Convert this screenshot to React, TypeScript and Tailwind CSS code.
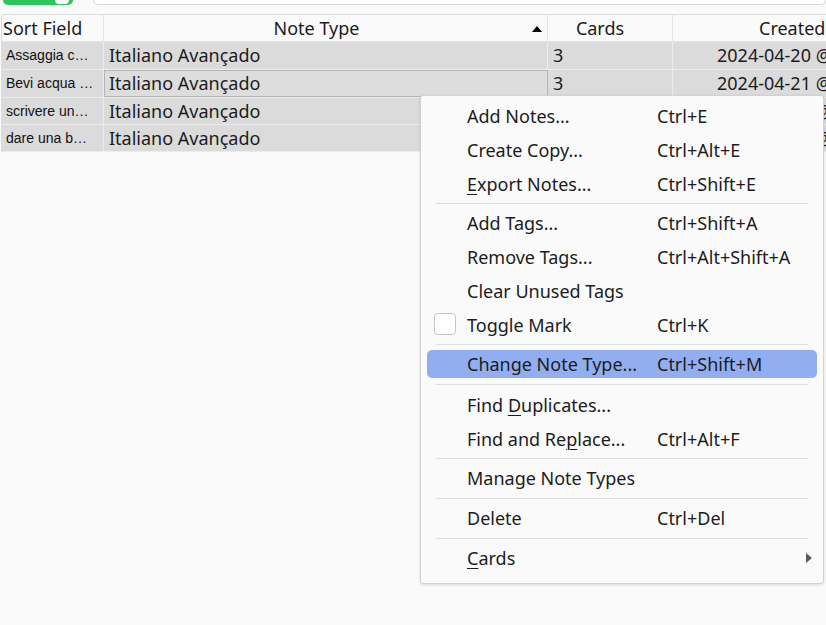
import React from 'react';

type Item =
  | { kind: 'sep'; h: string }
  | { kind: 'item'; label: React.ReactNode; shortcut?: string; check?: boolean; active?: boolean; sub?: boolean };

const U = ({ children }: { children: React.ReactNode }) => (
  <span className="underline decoration-1 underline-offset-[3px]">{children}</span>
);

const MENU: Item[] = [
  { kind: 'item', label: 'Add Notes...', shortcut: 'Ctrl+E' },
  { kind: 'item', label: 'Create Copy...', shortcut: 'Ctrl+Alt+E' },
  { kind: 'item', label: <><U>E</U>xport Notes...</>, shortcut: 'Ctrl+Shift+E' },
  { kind: 'sep', h: 'h-[5px]' },
  { kind: 'item', label: 'Add Tags...', shortcut: 'Ctrl+Shift+A' },
  { kind: 'item', label: 'Remove Tags...', shortcut: 'Ctrl+Alt+Shift+A' },
  { kind: 'item', label: 'Clear Unused Tags' },
  { kind: 'item', label: 'Toggle Mark', shortcut: 'Ctrl+K', check: true },
  { kind: 'sep', h: 'h-[5px]' },
  { kind: 'item', label: 'Change Note Type...', shortcut: 'Ctrl+Shift+M', active: true },
  { kind: 'sep', h: 'h-[7px]' },
  { kind: 'item', label: <>Find <U>D</U>uplicates...</> },
  { kind: 'item', label: <>Find and Re<U>p</U>lace...</>, shortcut: 'Ctrl+Alt+F' },
  { kind: 'sep', h: 'h-[5px]' },
  { kind: 'item', label: 'Manage Note Types' },
  { kind: 'sep', h: 'h-[6px]' },
  { kind: 'item', label: 'Delete', shortcut: 'Ctrl+Del' },
  { kind: 'sep', h: 'h-[6px]' },
  { kind: 'item', label: <><U>C</U>ards</>, sub: true },
];

const ROWS = [
  { sort: 'Assaggia c…', date: '2024-04-20 @ 10:12', h: 'h-[28px]' },
  { sort: 'Bevi acqua …', date: '2024-04-21 @ 09:47', h: 'h-[28px]', current: true },
  { sort: 'scrivere un…', date: '2024-04-21 @ 09:52', h: 'h-[27px]' },
  { sort: 'dare una b…', date: '2024-04-21 @ 09:58', h: 'h-[27px]' },
];

export default function App() {
  return (
    <div className="relative w-[826px] h-[625px] overflow-hidden bg-[#fafafa] font-['Noto_Sans',sans-serif] text-[#1c1c1c]">
      {/* Top toolbar (cut off) */}
      <div className="h-[14px] flex items-start">
        <div className="ml-[3px] w-[70px] h-[5px] rounded-b-[10px] bg-[#2ec55e] relative">
          <div className="absolute right-[4px] top-0 w-[14px] h-[4px] rounded-b-full bg-white" />
        </div>
        <div className="ml-[20px] flex-1 h-[5px] rounded-b-[6px] border border-t-0 border-[#d6d6d6] bg-white" />
      </div>

      {/* Table */}
      <div className="ml-[1px] rounded-tl-[4px] border-l border-t border-[#dcdcdc] overflow-hidden">
        <div className="flex h-[27px] bg-[#fafafa] text-[18px] leading-[27px] border-b border-[#e4e4e4] whitespace-nowrap">
          <div className="w-[102px] shrink-0 pl-[1px] border-r border-[#e4e4e4]">Sort Field</div>
          <div className="w-[444px] shrink-0 relative text-center pr-[18px] border-r border-[#e4e4e4]">
            Note Type
            <span className="absolute right-[5px] top-[11px] w-0 h-0 border-l-[5px] border-r-[5px] border-b-[6px] border-l-transparent border-r-transparent border-b-black" />
          </div>
          <div className="w-[125px] shrink-0 text-center pr-[20px] border-r border-[#e4e4e4]">Cards</div>
          <div className="w-[240px] shrink-0 pl-[86px]">Created</div>
        </div>
        {ROWS.map((r) => (
          <div key={r.sort} className={`flex ${r.h} bg-[#dbdbdb] border-b border-[#ececec] whitespace-nowrap items-stretch`}>
            <div className="w-[102px] shrink-0 pl-[4px] flex items-center font-['Liberation_Sans',sans-serif] text-[14px] text-[#111] border-r border-[#ececec]">
              {r.sort}
            </div>
            <div
              className={`w-[444px] shrink-0 flex items-center text-[18px] ${
                r.current ? 'border border-[#b4b4b4] bg-[#dddddd] pl-[4px]' : 'pl-[5px] border-r border-[#ececec]'
              }`}
            >
              Italiano Avançado
            </div>
            <div className="w-[125px] shrink-0 pl-[5px] flex items-center text-[18px] border-r border-[#ececec]">3</div>
            <div className="w-[240px] shrink-0 flex items-center pl-[44px] text-[18px]">{r.date}</div>
          </div>
        ))}
      </div>

      {/* Context menu */}
      <div className="absolute left-[420px] top-[95px] w-[404px] pt-[3px] pb-[8px] bg-[#fafafa] border border-[#d2d2d2] rounded-[3px] shadow-[0_1px_3px_rgba(0,0,0,0.12)] text-[18px] text-[#1c1c1c]">
        {MENU.map((it, i) =>
          it.kind === 'sep' ? (
            <div key={i} className={`${it.h} flex items-center px-[15px]`}>
              <div className="h-px flex-1 bg-[#dedede]" />
            </div>
          ) : (
            <div key={i} className="h-[34px] py-[3px] px-[6px]">
              <div
                className={`relative h-[28px] flex items-center rounded-[5px] whitespace-nowrap ${
                  it.active ? 'bg-[#91aff0]' : ''
                }`}
              >
                {it.check && (
                  <span className="absolute left-[7px] top-[2px] w-[22px] h-[22px] rounded-[4px] border border-[#c4c4c4] bg-white" />
                )}
                <span className="absolute left-[40px]">{it.label}</span>
                {it.shortcut && <span className="absolute left-[230px]">{it.shortcut}</span>}
                {it.sub && (
                  <span className="absolute right-[5px] top-[9px] w-0 h-0 border-t-[5px] border-b-[5px] border-l-[6px] border-t-transparent border-b-transparent border-l-[#5a5a5a]" />
                )}
              </div>
            </div>
          )
        )}
      </div>
    </div>
  );
}
